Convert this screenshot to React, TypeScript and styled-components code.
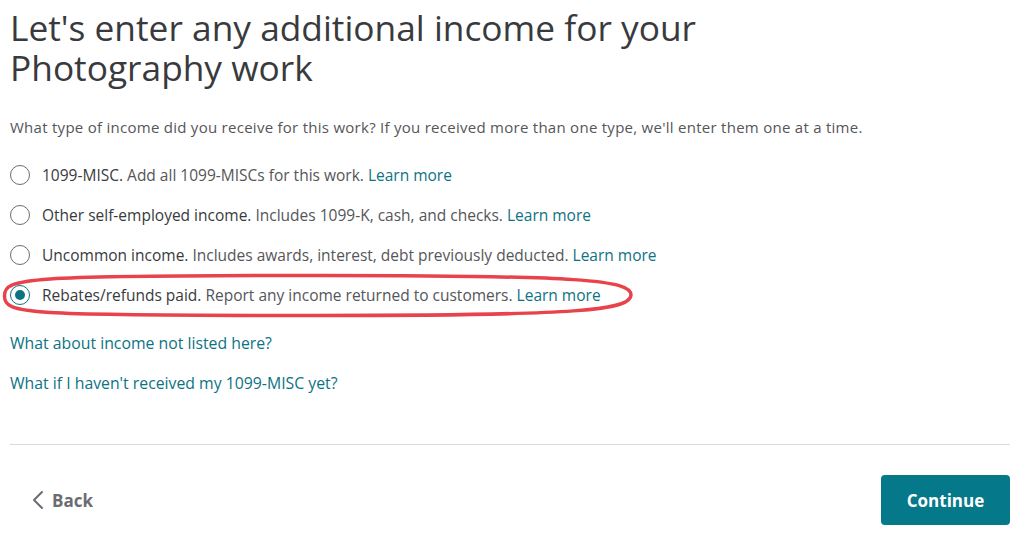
import React, { useState } from "react";
import styled, { createGlobalStyle } from "styled-components";

const GlobalStyle = createGlobalStyle`
  body {
    margin: 0;
    background: #fff;
    font-family: "Open Sans", "Noto Sans", sans-serif;
    color: #393a3d;
  }
`;

const Page = styled.div`
  width: 1000px;
  padding: 7px 25px 0 10px;
`;

const Title = styled.h1`
  margin: 0;
  font-size: 35.3px;
  font-weight: 400;
  line-height: 40px;
  color: #393a3d;
`;

const Intro = styled.p`
  margin: 30px 0 0;
  font-size: 15px;
  line-height: 20px;
  letter-spacing: 0.27px;
  color: #555659;
`;

const Options = styled.div`
  display: flex;
  flex-direction: column;
  margin-top: 18px;
`;

const OptionRow = styled.label`
  position: relative;
  display: flex;
  align-items: center;
  gap: 12px;
  height: 40px;
  font-size: 15.5px;
  cursor: pointer;
`;

const Radio = styled.span<{ $checked: boolean }>`
  flex: none;
  width: 20px;
  height: 20px;
  box-sizing: border-box;
  border-radius: 50%;
  border: 1.5px solid ${(p) => (p.$checked ? "#0d7383" : "#6b6c72")};
  display: flex;
  align-items: center;
  justify-content: center;

  &::after {
    content: "";
    width: 10px;
    height: 10px;
    border-radius: 50%;
    background: ${(p) => (p.$checked ? "#0d7383" : "transparent")};
  }
`;

const Label = styled.span`
  color: #555659;
`;

const Strong = styled.span`
  color: #393a3d;
  font-weight: 500;
`;

const LearnMore = styled.a`
  color: #0d7383;
  text-decoration: none;
`;

const Highlight = styled.svg`
  position: absolute;
  left: -8px;
  top: -3px;
  pointer-events: none;
`;

const HelpLinks = styled.div`
  display: flex;
  flex-direction: column;
  gap: 20px;
  margin-top: 18px;
`;

const HelpLink = styled.a`
  font-size: 15.8px;
  line-height: 20px;
  color: #0d7383;
  text-decoration: none;
`;

const Divider = styled.hr`
  margin: 51px 0 0;
  border: none;
  border-top: 1px solid #d8d9dc;
`;

const Footer = styled.div`
  display: flex;
  align-items: center;
  justify-content: space-between;
  margin-top: 30px;
`;

const BackButton = styled.button`
  display: flex;
  align-items: center;
  gap: 8px;
  margin-left: 22px;
  padding: 0;
  border: none;
  background: none;
  font-family: inherit;
  font-size: 17px;
  font-weight: 700;
  color: #6b6c72;
  cursor: pointer;
`;

const ContinueButton = styled.button`
  width: 129px;
  height: 50px;
  border: none;
  border-radius: 4px;
  background: #057889;
  color: #fff;
  font-family: inherit;
  font-size: 17px;
  font-weight: 700;
  cursor: pointer;
`;

const options = [
  {
    title: "1099-MISC.",
    text: "Add all 1099-MISCs for this work.",
  },
  {
    title: "Other self-employed income.",
    text: "Includes 1099-K, cash, and checks.",
  },
  {
    title: "Uncommon income.",
    text: "Includes awards, interest, debt previously deducted.",
  },
  {
    title: "Rebates/refunds paid.",
    text: "Report any income returned to customers.",
  },
];

const App = () => {
  const [selected, setSelected] = useState(3);

  return (
    <Page>
      <GlobalStyle />
      <Title>
        Let's enter any additional income for your
        <br />
        Photography work
      </Title>
      <Intro>
        What type of income did you receive for this work? If you received
        more than one type, we'll enter them one at a time.
      </Intro>
      <Options>
        {options.map((o, i) => (
          <OptionRow key={o.title} onClick={() => setSelected(i)}>
            <Radio $checked={selected === i} />
            <Label>
              <Strong>{o.title}</Strong> {o.text}{" "}
              <LearnMore href="#">Learn more</LearnMore>
            </Label>
            {i === 3 && (
              <Highlight width="634" height="48" viewBox="0 0 634 48">
                <path
                  d="M2.5 24 C2.5 6, 20 3.5, 316 3.5 C580 3.5, 629 8, 629 23 C629 38, 580 43.5, 316 43.5 C20 43.5, 2.5 42, 2.5 24 Z"
                  fill="none"
                  stroke="#e8434b"
                  strokeWidth="3.5"
                />
              </Highlight>
            )}
          </OptionRow>
        ))}
      </Options>
      <HelpLinks>
        <HelpLink href="#">What about income not listed here?</HelpLink>
        <HelpLink href="#">What if I haven't received my 1099-MISC yet?</HelpLink>
      </HelpLinks>
      <Divider />
      <Footer>
        <BackButton>
          <svg width="12" height="20" viewBox="0 0 12 20">
            <path
              d="M10 2 L2 10 L10 18"
              fill="none"
              stroke="#6b6c72"
              strokeWidth="2"
              strokeLinecap="round"
              strokeLinejoin="round"
            />
          </svg>
          Back
        </BackButton>
        <ContinueButton>Continue</ContinueButton>
      </Footer>
    </Page>
  );
};

export default App;
